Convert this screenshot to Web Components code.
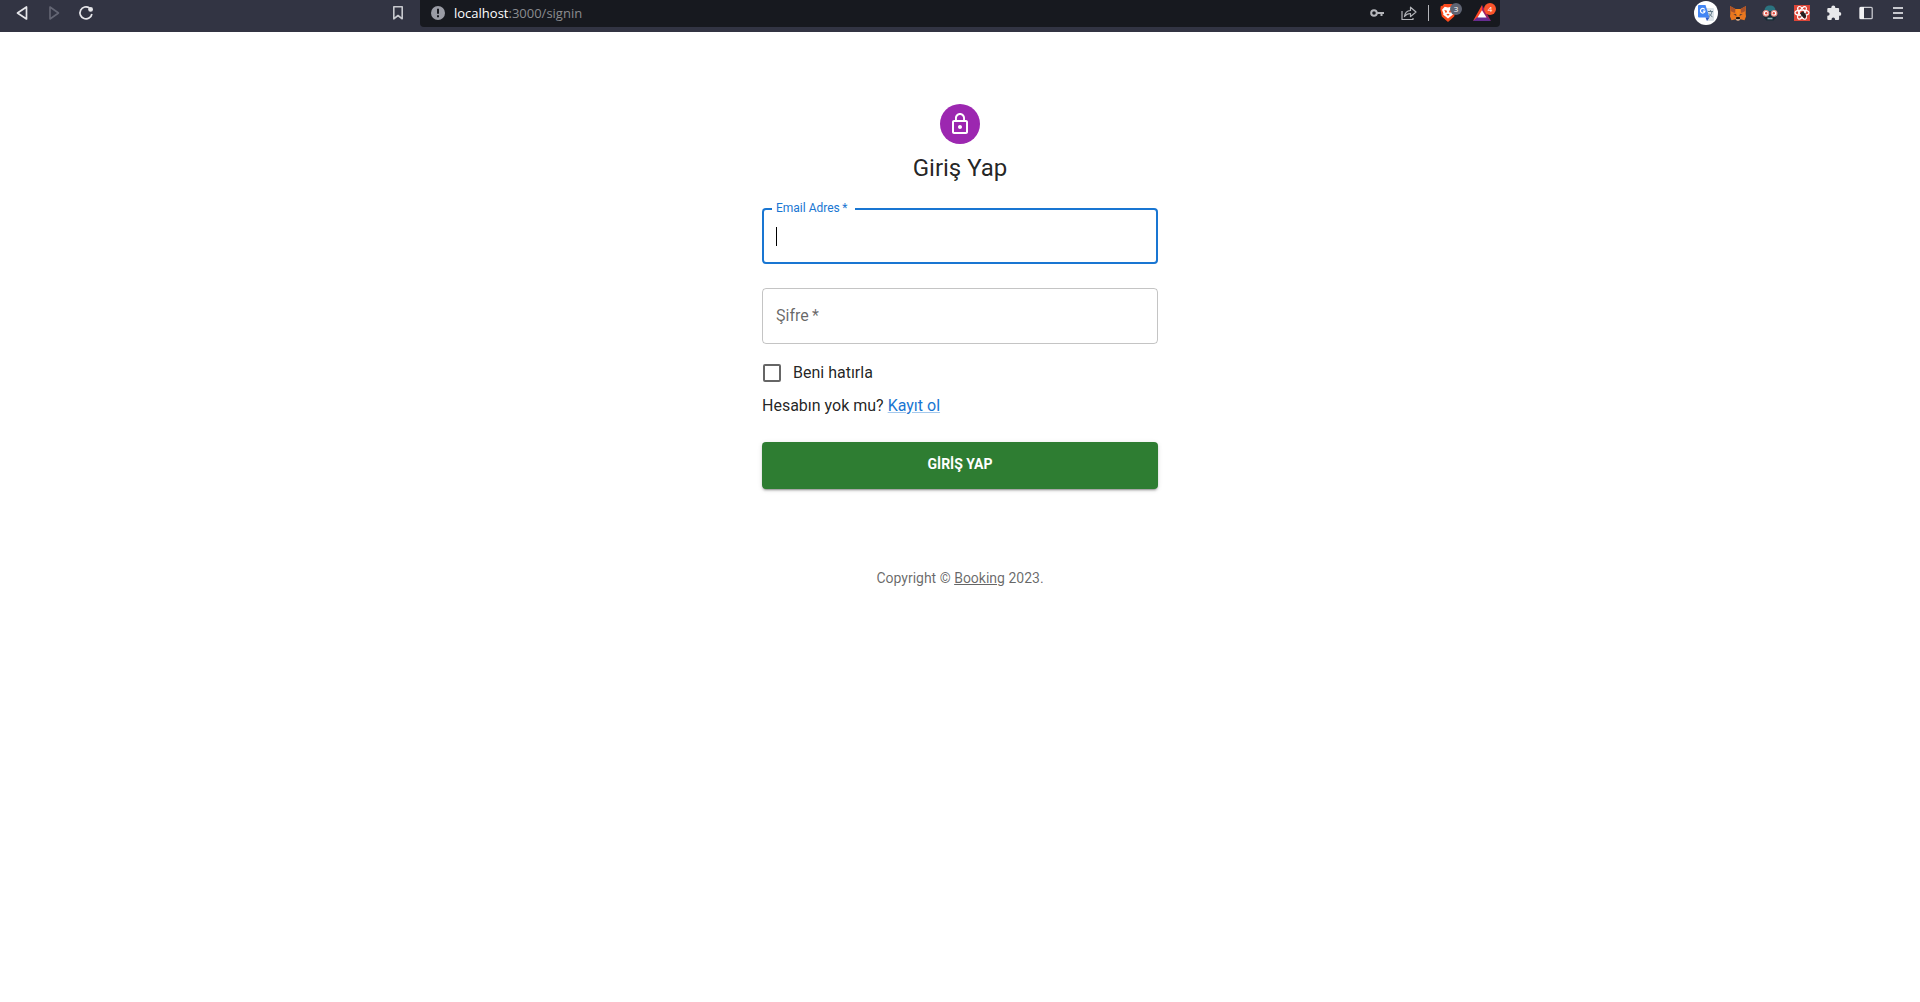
<!DOCTYPE html>
<html lang="tr">
<head>
<meta charset="utf-8">
<meta name="viewport" content="width=device-width, initial-scale=1">
<title>Giriş Yap</title>
<style>
  html, body { margin: 0; min-height: 100%; background: #fff; }
  body { font-family: Roboto, "Liberation Sans", sans-serif; font-size: 16px; line-height: 24px; color: rgba(0,0,0,.87); }
</style>
</head>
<body>
<browser-bar></browser-bar>
<sign-in-page></sign-in-page>
<script>
const define = (name, html, init) => customElements.define(name, class extends HTMLElement {
  constructor() {
    super();
    const root = this.attachShadow({ mode: 'open' });
    const t = document.createElement('template');
    t.innerHTML = html;
    root.append(t.content.cloneNode(true));
  }
  connectedCallback() { if (init) init(this, this.shadowRoot); }
});

define('bar-button', `
<style>
  :host { display: block; flex: none; width: 32px; height: 26px; }
  button { all: unset; box-sizing: border-box; width: 100%; height: 100%; display: flex; align-items: center; justify-content: center; color: inherit; position: relative; }
  .badge { position: absolute; left: 18px; top: 3px; width: 12px; height: 12px; border-radius: 50%; background: var(--badge, #5f6473); color: #fff; font: 8px/12px "Open Sans", sans-serif; text-align: center; }
  .badge[hidden] { display: none; }
</style>
<button type="button"><slot></slot><span class="badge" hidden></span></button>`,
(el, root) => {
  root.querySelector('button').setAttribute('aria-label', el.getAttribute('label') || '');
  const b = root.querySelector('.badge');
  if (el.hasAttribute('badge')) { b.hidden = false; b.textContent = el.getAttribute('badge'); }
});

define('browser-bar', `
<style>
  :host { display: grid; grid-template-columns: 1fr 56.25% 1fr; height: 32px; background: #323443; color: #e6e6ea; }
  .left, .right { display: flex; padding: 0 6px; }
  .right { justify-content: flex-end; }
  .spacer { flex: 1; }
  svg { display: block; }
  .address { display: flex; align-items: center; height: 27px; box-sizing: border-box; padding: 0 2px 1px; background: #17191f; border-radius: 0 0 4px 4px; color: #b4b5ba; }
  .url { flex: 1; font: 13px/20px "Open Sans", "Noto Sans", sans-serif; color: #8b8c90; }
  .url b { font-weight: 500; color: #fff; }
  .rule { width: 1px; height: 16px; margin: 0 3px; background: #b4b5ba; }
  .dim { color: #646674; }
  .rewards { --badge: #fb542b; margin-left: 2px; }
  .circle { display: grid; place-items: center; width: 24px; height: 24px; border-radius: 50%; background: #fff; }
</style>
<nav class="left">
  <bar-button label="Geri"><svg width="14" height="16" viewBox="0 0 14 16" fill="none" stroke="currentColor" stroke-width="1.7" stroke-linejoin="round"><path d="M11.500 2v12L2.500 8z"/></svg></bar-button>
  <bar-button class="dim" label="İleri"><svg width="14" height="16" viewBox="0 0 14 16" fill="none" stroke="currentColor" stroke-width="1.6" stroke-linejoin="round"><path d="M3 2v12L11.500 8z"/></svg></bar-button>
  <bar-button label="Yenile"><svg width="16" height="16" viewBox="0 0 16 16" fill="none" stroke="currentColor" stroke-width="1.700"><path d="M11.500 3A6 6 0 1 0 13.900 9"/><circle cx="12.600" cy="4.400" r="2.400" fill="currentColor" stroke="none"/></svg></bar-button>
  <span class="spacer"></span>
  <bar-button label="Yer işareti"><svg width="12" height="16" viewBox="0 0 12 16" fill="none" stroke="#c7c8ce" stroke-width="1.600" stroke-linejoin="round"><path d="M1.800 1.800h8.400v12L6 10.500l-4.200 3.300z"/></svg></bar-button>
</nav>
<div class="address">
  <bar-button label="Site bilgisi"><svg width="14" height="14" viewBox="0 0 14 14"><circle cx="7" cy="7" r="7" fill="#9a9ca5"/><path d="M6 2.800h2v5H6zM6 9.200h2v2H6z" fill="#17191f"/></svg></bar-button>
  <div class="url"><b>localhost</b>:3000/signin</div>
  <bar-button label="Parolalar"><svg width="14" height="10" viewBox="0 0 14 10" fill="none" stroke="currentColor" stroke-width="2"><circle cx="4" cy="5" r="2.800"/><path d="M6.800 5H14M11.500 5v3"/></svg></bar-button>
  <bar-button label="Paylaş"><svg width="16" height="16" viewBox="0 0 16 16" fill="none" stroke="currentColor" stroke-width="1.200" stroke-linejoin="round"><path d="M1 6v8.500h11V13"/><path d="M3.500 11.500C4 7.500 6.500 5.700 9.500 5.500V2.200L15 7l-5.500 4.600V8.500c-2.500 0-4.300.8-6 3z"/></svg></bar-button>
  <span class="rule"></span>
  <bar-button label="Brave Shields" badge="3"><svg width="16" height="18" viewBox="0 0 16 18"><path d="M4 0h8l1.500 1.700 1.700.3.500 3-1.500 7.500L8 18l-6.200-5.500L.3 5l.5-3 1.700-.3z" fill="#fb4b1d"/><path d="M4.700 2.800L8 3.600l3.300-.8 2.700 2.900-1.400 3.600.2 1.500-2 1.500L8 14.500l-2.800-2.200-2-1.500.2-1.500L2 5.700z" fill="#fff"/><path d="M4.300 5.900l2.300.5.400 1.500-1.300 1zM11.700 5.900l-2.300.5-.4 1.500 1.300 1zM6.300 10.500L8 9.800l1.700.7L8 11.700z" fill="#fb4b1d"/></svg></bar-button>
  <bar-button label="Brave Rewards" badge="4" class="rewards"><svg width="18" height="16" viewBox="0 0 18 16"><path d="M9 0L0 16l9-5z" fill="#ff4724"/><path d="M9 0l9 16-9-5z" fill="#9e1f63"/><path d="M0 16h18l-4.500-4h-9z" fill="#662d91"/><path d="M9 5.200L4.500 12.500h9z" fill="#fff"/></svg></bar-button>
</div>
<nav class="right">
  <bar-button label="Google Translate"><span class="circle"><svg width="16" height="16" viewBox="0 0 16 16"><path d="M6 3h9a1 1 0 0 1 1 1v11a1 1 0 0 1-1 1H9z" fill="#dce3e8"/><path d="M1 0h6.500l4 12.500H1a1 1 0 0 1-1-1V1a1 1 0 0 1 1-1z" fill="#4285f4"/><path d="M7.500 12.500h4L9 16z" fill="#2a56c6"/><path d="M6.700 4.500A2.300 2.300 0 1 0 7 6.200H4.900" fill="none" stroke="#fff" stroke-width="1.200"/><path d="M10 6.500h5M12.500 5.200v1.300M14 6.500c-.5 2.500-1.500 4-3 5M11 8.500l3.500 3.700" fill="none" stroke="#607988" stroke-width="1"/></svg></span></bar-button>
  <bar-button label="MetaMask"><svg width="16" height="16" viewBox="0 0 16 16"><path d="M0 1l5.500 3h5L16 1l-.3 7.500.3 3-1.500 3.700-4-1L9 15.500H7l-1.500-1.300-4 1L0 11.500l.3-3z" fill="#e8761f"/><path d="M0 1l5.500 3L4.700 8 .5 6zM16 1l-5.500 3 .8 4 4.200-2z" fill="#a9522a"/><path d="M5.500 4h5L9.500 9 8 12 6.500 9z" fill="#f6851b"/><path d="M3.300 9.600l2.700-.3.500 1.500zM12.700 9.600L10 9.300l-.5 1.500z" fill="#24303d"/><path d="M6.300 12h3.400l.3 2-1 .6H7l-1-.6z" fill="#1c1713"/><path d="M5.700 13.800L7 14.300h2l1.300-.5L9.200 15.500H6.800z" fill="#cfc0b4"/></svg></bar-button>
  <bar-button label="Gizlilik eklentisi"><svg width="16" height="16" viewBox="0 0 16 16"><path d="M2.500 6C2.500 2.300 4.700.5 8 .5s5.500 1.800 5.500 5.500z" fill="#2b7380"/><path d="M2 9h12v4l-2.500 2.500h-7L2 13z" fill="#172c35"/><circle cx="3.900" cy="8.300" r="2.800" fill="#fff" stroke="#e58a80" stroke-width="1.200"/><circle cx="12.100" cy="8.300" r="2.800" fill="#fff" stroke="#e58a80" stroke-width="1.200"/><circle cx="4.200" cy="8.300" r="1.200" fill="#e0473c"/><circle cx="11.800" cy="8.300" r="1.200" fill="#e0473c"/><path d="M5.500 12.700h5v1.600h-5z" fill="#8fb0b5"/></svg></bar-button>
  <bar-button label="React Developer Tools"><svg width="16" height="16" viewBox="0 0 16 16"><path d="M0 0h16v16H0z" fill="#dd4638"/><g fill="none" stroke="#fff" stroke-width="1.200"><ellipse cx="8" cy="7.800" rx="7" ry="2.700"/><ellipse cx="8" cy="7.800" rx="7" ry="2.700" transform="rotate(60 8 7.800)"/><ellipse cx="8" cy="7.800" rx="7" ry="2.700" transform="rotate(120 8 7.800)"/></g><ellipse cx="9.500" cy="9.800" rx="2" ry="3.400" fill="#25201f" transform="rotate(-35 9.500 9.800)"/><path d="M6 8l5.500 5M6.200 11.500l6-3M9 6l1.500 7.500" stroke="#25201f" stroke-width=".8"/></svg></bar-button>
  <bar-button label="Eklentiler"><svg width="16" height="16" viewBox="0 0 16 16"><path d="M5.300 2.400a2 2 0 0 1 4 0V3h2.800a1 1 0 0 1 1 1v3h.3a1.900 1.900 0 0 1 0 3.800h-.3V14a1 1 0 0 1-1 1H9.100v-.6a1.800 1.800 0 0 0-3.600 0v.6H2.300a1 1 0 0 1-1-1v-3.200h.5a1.800 1.800 0 0 0 0-3.600h-.5V4a1 1 0 0 1 1-1h3z" fill="#e8e8eb"/></svg></bar-button>
  <bar-button label="Kenar çubuğu"><svg width="14" height="14" viewBox="0 0 14 14"><rect x=".8" y="1.300" width="12.400" height="11.400" rx="1" fill="none" stroke="#c7c8ce" stroke-width="1.300"/><path d="M1 1h4v12H1z" fill="#f1f1f3"/></svg></bar-button>
  <bar-button label="Menü"><svg width="10" height="12" viewBox="0 0 10 12" fill="#c7c8ce"><path d="M0 0h10v2H0zM0 5h10v2H0zM0 10h10v2H0z"/></svg></bar-button>
</nav>`);

define('outlined-field', `
<style>
  :host { display: block; position: relative; height: 56px; margin: 16px 0 8px; }
  input { box-sizing: border-box; width: 100%; height: 56px; margin: 0; padding: 16px 14px; border: 1px solid rgba(0,0,0,.23); border-radius: 4px; background: none; font: inherit; color: inherit; outline: none; caret-color: transparent; }
  label { position: absolute; left: 14px; top: 16px; color: rgba(0,0,0,.6); pointer-events: none; }
  .caret { display: none; position: absolute; left: 14px; top: 19px; width: 1px; height: 19px; background: #000; }
  :host([active]) input { border: 2px solid #1976d2; }
  :host([active]) label { left: 10px; top: -8px; padding: 0 8px 0 4px; background: #fff; font-size: 12px; line-height: 16px; color: #1976d2; }
  :host([active]) .caret { display: block; }
</style>
<input id="field" required><label for="field"></label><span class="caret"></span>`,
(el, root) => {
  root.querySelector('label').textContent = el.getAttribute('label') + '\u2009*';
  root.querySelector('input').type = el.getAttribute('type') || 'text';
});

define('check-option', `
<style>
  :host { display: block; }
  label { display: flex; align-items: center; height: 42px; gap: 12px; padding-left: 1px; }
  input { appearance: none; flex: none; box-sizing: border-box; width: 18px; height: 18px; margin: 0; border: 2px solid rgba(0,0,0,.6); border-radius: 2px; }
  input:checked { background: #1976d2; border-color: #1976d2; }
</style>
<label><input type="checkbox"><span><slot></slot></span></label>`);

define('submit-button', `
<style>
  :host { display: block; margin-top: 24px; }
  button { display: block; box-sizing: border-box; width: 100%; margin: 0; border: 0; border-radius: 4px; padding: 10px 16px 13px; background: #2e7d32; color: #fff; font: 700 14px/24px Roboto, sans-serif; box-shadow: 0 3px 1px -2px rgba(0,0,0,.2), 0 2px 2px 0 rgba(0,0,0,.14), 0 1px 5px 0 rgba(0,0,0,.12); }
</style>
<button type="submit"><slot></slot></button>`);

define('lock-avatar', `
<style>
  :host { display: grid; place-items: center; width: 40px; height: 40px; border-radius: 50%; background: #9c27b0; margin: 8px; }
</style>
<svg width="24" height="24" viewBox="0 0 24 24" fill="#fff"><path d="M12 17c1.100 0 2-.9 2-2s-.9-2-2-2-2 .9-2 2 .9 2 2 2zm6-9h-1V6c0-2.760-2.240-5-5-5S7 3.240 7 6v2H6c-1.100 0-2 .9-2 2v10c0 1.100.9 2 2 2h12c1.100 0 2-.9 2-2V10c0-1.100-.9-2-2-2zM8.900 6c0-1.710 1.390-3.100 3.100-3.100s3.100 1.390 3.100 3.100v2H8.900V6zM18 20H6V10h12v10z"/></svg>`);

define('sign-in-page', `
<style>
  :host { display: block; box-sizing: border-box; max-width: 444px; margin: 0 auto; padding: 64px 24px 0; }
  main { display: flex; flex-direction: column; align-items: center; }
  h1 { margin: 0; font-size: 24px; line-height: 32px; font-weight: 400; }
  form { display: flex; flex-direction: column; width: 100%; margin-top: 8px; }
  p { margin: 0; }
  .join a { color: #1976d2; text-decoration-color: rgba(25,118,210,.4); }
  footer { margin-top: 79px; text-align: center; font-size: 14px; line-height: 20px; color: rgba(0,0,0,.6); }
  footer a { color: inherit; }
</style>
<main>
  <lock-avatar></lock-avatar>
  <h1>Giriş Yap</h1>
  <form>
    <outlined-field label="Email Adres" type="email" active></outlined-field>
    <outlined-field label="Şifre" type="password"></outlined-field>
    <check-option>Beni hatırla</check-option>
    <p class="join">Hesabın yok mu? <a href="#signup">Kayıt ol</a></p>
    <submit-button>GİRİŞ YAP</submit-button>
  </form>
</main>
<footer>Copyright © <a href="#booking">Booking</a> 2023.</footer>`);
</script>
</body>
</html>
